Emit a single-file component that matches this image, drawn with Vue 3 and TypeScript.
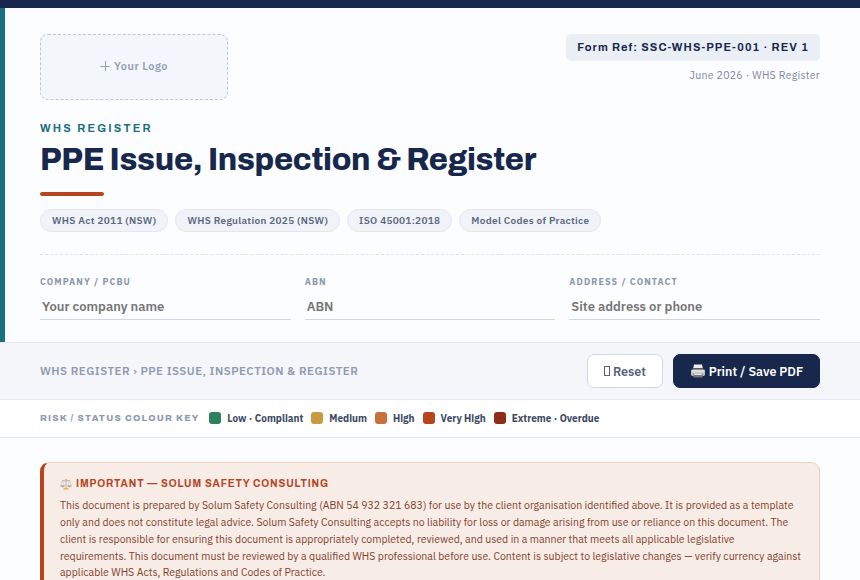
<script setup lang="ts">
import { ref } from 'vue'

interface Field { label: string; placeholder: string; value: string }
interface Level { label: string; tone: string }

const standards: string[] = ['WHS Act 2011 (NSW)', 'WHS Regulation 2025 (NSW)', 'ISO 45001:2018', 'Model Codes of Practice']
const blank = (): Field[] => [
  { label: 'Company / PCBU', placeholder: 'Your company name', value: '' },
  { label: 'ABN', placeholder: 'ABN', value: '' },
  { label: 'Address / Contact', placeholder: 'Site address or phone', value: '' },
]
const fields = ref<Field[]>(blank())
const levels: Level[] = [
  { label: 'Low · Compliant', tone: 'low' },
  { label: 'Medium', tone: 'medium' },
  { label: 'High', tone: 'high' },
  { label: 'Very High', tone: 'very-high' },
  { label: 'Extreme · Overdue', tone: 'extreme' },
]
const reset = () => { fields.value = blank() }
const print = () => window.print()
</script>

<template>
  <div class="page">
    <div class="topbar"></div>
    <header class="head">
      <div class="head-row">
        <div class="logo"><svg class="plus" viewBox="0 0 10 10"><path d="M5.5 0v10M.5 5.5h9" /></svg><span>Your Logo</span></div>
        <div class="meta">
          <div class="ref">Form Ref: SSC-WHS-PPE-001 · REV 1</div>
          <div class="date">June 2026 · WHS Register</div>
        </div>
      </div>
      <div class="eyebrow">WHS Register</div>
      <h1>PPE Issue, Inspection &amp; Register</h1>
      <div class="rule"></div>
      <div class="chips"><span v-for="s in standards" :key="s" class="chip">{{ s }}</span></div>
      <div class="fields">
        <label v-for="f in fields" :key="f.label" class="field">
          <span class="field-label">{{ f.label }}</span>
          <input v-model="f.value" :placeholder="f.placeholder" />
        </label>
      </div>
    </header>
    <nav class="toolbar">
      <div class="crumb">WHS Register › PPE Issue, Inspection &amp; Register</div>
      <div class="actions">
        <button class="btn light" @click="reset"><i class="box"></i>Reset</button>
        <button class="btn dark" @click="print">
          <svg class="printer" viewBox="0 0 14 14">
            <path d="M3 .5h8l1 4.5H2z" fill="#eeeeee" />
            <rect x="1.6" y="4" width="10.8" height="2" rx=".5" fill="#5c5c5c" />
            <rect x="0" y="5.4" width="14" height="6.6" rx="1.4" fill="#bdbdbd" />
            <rect x=".6" y="6" width="12.8" height="2.6" rx=".8" fill="#dddddd" />
            <rect x="2.4" y="9.4" width="9.2" height="4" rx=".6" fill="#777777" />
            <rect x="3.2" y="9.4" width="7.6" height="1.6" fill="#e6e6e6" />
          </svg>
          <span>Print / Save PDF</span>
        </button>
      </div>
    </nav>
    <div class="legend">
      <span class="legend-title">Risk / Status Colour Key</span>
      <span v-for="l in levels" :key="l.label" class="level"><i class="swatch" :class="l.tone"></i><span class="level-name">{{ l.label }}</span></span>
    </div>
    <main>
      <section class="notice">
        <h2>
          <svg class="scales" viewBox="0 0 12 12">
            <path d="M6 1v9M1.8 2.8h8.4" stroke="#b5b2b0" stroke-width="1" fill="none" />
            <path d="M2.5 3 .8 7.2M2.5 3l1.8 4.2M9.5 3 7.7 7.2M9.5 3l1.8 4.2" stroke="#c9c5c2" stroke-width=".6" fill="none" />
            <path d="M.3 7.2h4.4c0 1.4-.9 2-2.2 2s-2.2-.6-2.2-2zM7.3 7.2h4.4c0 1.4-.9 2-2.2 2s-2.2-.6-2.2-2z" fill="#b0afaf" />
            <circle cx="6" cy="1.6" r=".9" fill="#e2b65d" />
            <path d="M3.1 11.6c.2-1.3 1.2-1.8 2.9-1.8s2.7.5 2.9 1.8z" fill="#f0ad36" />
          </svg>
          <span>Important — Solum Safety Consulting</span>
        </h2>
        <p>This document is prepared by Solum Safety Consulting (ABN 54 932 321 683) for use by the client organisation identified above. It is provided as a template only and does not constitute legal advice. Solum Safety Consulting accepts no liability for loss or damage arising from use or reliance on this document. The client is responsible for ensuring this document is appropriately completed, reviewed, and used in a manner that meets all applicable legislative requirements. This document must be reviewed by a qualified WHS professional before use. Content is subject to legislative changes — verify currency against applicable WHS Acts, Regulations and Codes of Practice.</p>
      </section>
    </main>
  </div>
</template>

<style>
html, body { margin: 0; height: 100%; overflow: hidden; background: #fcfdff; }
</style>

<style scoped>
* { box-sizing: border-box; }
.page { height: 580px; overflow: hidden; background: #fcfdff; font-family: "IBM Plex Sans", "Noto Sans", sans-serif; color: #17284c; }
.topbar { height: 8px; background: #17284c; }
.head { height: 334px; border-left: 5px solid #1a7080; padding: 26px 40px 0 35px; }
.head-row { display: flex; justify-content: space-between; align-items: flex-start; }
.logo { width: 188px; height: 66px; border: 1px dashed #bcc8d8; border-radius: 8px; background: #f3f6fb; display: flex; align-items: center; justify-content: center; padding-bottom: 2px; font-size: 11px; font-weight: 600; letter-spacing: .44px; color: #94a0b4; }
.plus { width: 10px; height: 10px; margin-right: 4px; fill: none; stroke: currentColor; stroke-width: 1; }
.meta { display: flex; flex-direction: column; align-items: flex-end; }
.ref { height: 27px; line-height: 27px; padding: 0 11px; border-radius: 5px; background: #eaeff6; font-family: Archivo, "Liberation Sans", sans-serif; font-size: 11px; font-weight: 700; letter-spacing: 1.11px; white-space: nowrap; }
.date { margin-top: 6px; font-size: 10.5px; line-height: 17px; letter-spacing: .3px; color: #7c879f; }
.eyebrow { margin-top: 20px; font: 700 11px/16px Archivo, "Liberation Sans", sans-serif; letter-spacing: 2.2px; text-transform: uppercase; color: #1a7080; }
h1 { margin: 7px 0 0; font: 800 31px/35px Archivo, "Liberation Sans", sans-serif; letter-spacing: -.31px; white-space: nowrap; }
.rule { width: 64px; height: 4px; margin-top: 14px; border-radius: 2px; background: #b5441f; }
.chips { display: flex; gap: 7px; margin-top: 13px; }
.chip { height: 23px; line-height: 21px; border: 1px solid #e2e7ef; border-radius: 12px; background: #f0f3f8; padding: 0 11px; font-size: 10px; font-weight: 600; letter-spacing: .3px; color: #5a6780; white-space: nowrap; }
.fields { display: grid; grid-template-columns: repeat(3, 1fr); gap: 14px; margin-top: 22px; padding-top: 19px; border-top: 1px dashed #dde2ec; }
.field { display: flex; flex-direction: column; min-width: 0; }
.field-label { font-size: 9px; font-weight: 700; line-height: 16px; letter-spacing: 1.08px; text-transform: uppercase; color: #8a96ad; white-space: nowrap; }
input { width: 100%; height: 26px; margin-top: 4px; padding: 0 2px; border: 0; border-bottom: 1px solid #cfd7e5; border-radius: 0; background: transparent; font-family: inherit; font-size: 13px; font-weight: 600; outline: 0; }
input::placeholder { color: #757575; }
.toolbar { height: 58px; padding: 0 40px; display: flex; align-items: center; justify-content: space-between; border-top: 1px solid #e3e7ef; border-bottom: 1px solid #e3e7ef; background: #f4f6fa; }
.crumb { padding-bottom: 2px; font-size: 11.5px; font-weight: 600; letter-spacing: .46px; text-transform: uppercase; color: #8f9bb1; white-space: nowrap; }
.actions { display: flex; gap: 10px; }
.btn { height: 34px; display: flex; align-items: center; justify-content: center; border-radius: 7px; padding: 0; font-family: inherit; font-size: 12.5px; font-weight: 600; white-space: nowrap; }
.light { width: 76px; border: 1px solid #cfd9e8; background: #fff; color: #55627a; }
.dark { width: 147px; padding-left: 1px; border: 1px solid #17284c; background: #17284c; color: #fff; }
.box { width: 6px; height: 10px; margin-right: 3px; border: 1px solid currentColor; }
.printer { width: 14px; height: 14px; margin-right: 4px; }
.legend { height: 38px; padding: 0 40px 2px; display: flex; align-items: center; border-bottom: 1px solid #e3e7ef; background: #fff; }
.legend-title { font: 800 9px/12px Archivo, "Liberation Sans", sans-serif; letter-spacing: 1.26px; text-transform: uppercase; color: #8f9bb1; white-space: nowrap; margin-right: 9.7px; }
.level { display: flex; align-items: center; gap: 6px; margin-right: 8px; font-size: 10px; font-weight: 700; color: #3c495f; white-space: nowrap; }
.level-name { padding-top: 1.5px; }
.swatch { width: 12px; height: 12px; border-radius: 3px; }
.low { background: #2e7f5d; }
.medium { background: #c99a40; }
.high { background: #c8713f; }
.very-high { background: #b5441f; }
.extreme { background: #8d2d17; }
main { padding: 24px 40px; }
.notice { height: 140px; border: 1px solid #ebcdc2; border-left: 4px solid #b5441f; border-radius: 9px; background: #f8ece7; padding: 12px 16px; }
h2 { display: flex; align-items: center; margin: 0; font: 700 10px/17px Archivo, "Liberation Sans", sans-serif; letter-spacing: .9px; text-transform: uppercase; color: #b5441f; }
.scales { width: 12px; height: 12px; margin-right: 4px; }
p { margin: 5px 0 0; font-size: 10.5px; line-height: 16.85px; color: #7f3f2a; }
</style>
